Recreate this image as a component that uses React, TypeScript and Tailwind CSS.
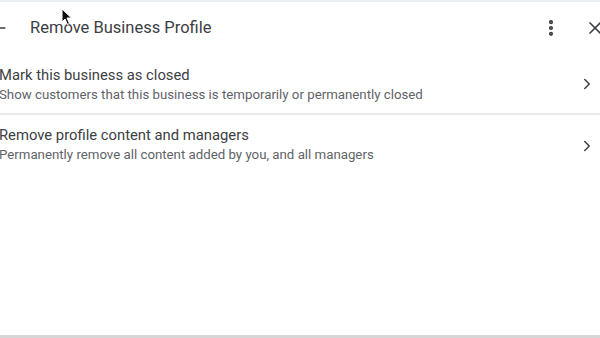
import { MoreVertical, X, ChevronRight, ArrowLeft } from 'lucide-react'

const rows = [
  {
    title: 'Mark this business as closed',
    sub: 'Show customers that this business is temporarily or permanently closed',
  },
  {
    title: 'Remove profile content and managers',
    sub: 'Permanently remove all content added by you, and all managers',
  },
]

export default function App() {
  return (
    <div className="relative w-[600px] h-[338px] bg-white overflow-hidden flex flex-col font-['Roboto',sans-serif]">
      <div className="h-[2px] bg-[#eceff1]" />
      {/* header */}
      <div className="h-[52px] flex items-center">
        <ArrowLeft className="ml-[-11px] w-[20px] h-[20px] text-[#3c4043]" strokeWidth={2} />
        <div className="ml-[21px] text-[16.5px] text-[#3c4043]">Remove Business Profile</div>
        <div className="flex-1" />
        <MoreVertical className="w-[20px] h-[20px] text-[#3c4043]" strokeWidth={3} />
        <X className="ml-[24px] mr-[-5px] w-[20px] h-[20px] text-[#3c4043]" strokeWidth={2} />
      </div>
      {rows.map((r, i) => (
        <div key={i} className={'h-[61px] flex items-center ' + (i === 0 ? 'border-b-2 border-[#e8eaed]' : '')}>
          <div className={'flex-1 ml-[-1px] ' + (i === 0 ? 'mt-[2px]' : 'mt-[-2px]')}>
            <div className="text-[14.8px] leading-[20px] text-[#3c4043]">{r.title}</div>
            <div className="text-[13.25px] leading-[19px] text-[#5f6368]">{r.sub}</div>
          </div>
          <ChevronRight className="mr-[4px] w-[18px] h-[18px] text-[#3c4043]" strokeWidth={2} />
        </div>
      ))}
      <div className="flex-1" />
      <div className="h-[3px] bg-[#d6d6d6]" />
      {/* mouse pointer */}
      <svg className="absolute left-[61px] top-[8px]" width="12" height="18" viewBox="0 0 12 18">
        <path d="M1 1 L1 14 L4 11 L6.5 16.5 L8.5 15.5 L6 10 L10.5 10 Z" fill="#111" stroke="#fff" strokeWidth="1" />
      </svg>
    </div>
  )
}
